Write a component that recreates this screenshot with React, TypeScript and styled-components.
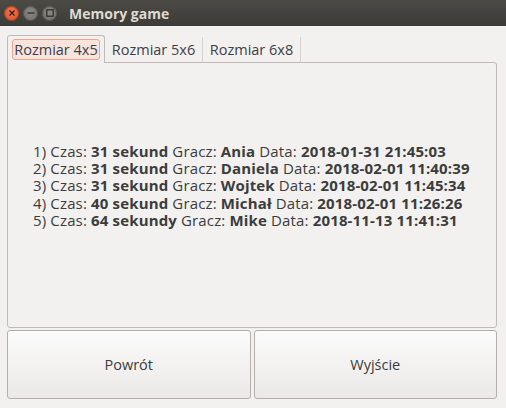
import React, { useState } from 'react';
import styled, { createGlobalStyle } from 'styled-components';

const GlobalStyle = createGlobalStyle`
  html, body {
    margin: 0;
    padding: 0;
    background: #f2f1f0;
  }
  body {
    font-family: 'Open Sans', 'DejaVu Sans', sans-serif;
  }
`;

const scores = [
  { czas: '31 sekund', gracz: 'Ania', data: '2018-01-31 21:45:03' },
  { czas: '31 sekund', gracz: 'Daniela', data: '2018-02-01 11:40:39' },
  { czas: '31 sekund', gracz: 'Wojtek', data: '2018-02-01 11:45:34' },
  { czas: '40 sekund', gracz: 'Michał', data: '2018-02-01 11:26:26' },
  { czas: '64 sekundy', gracz: 'Mike', data: '2018-11-13 11:41:31' },
];

const tabs = ['Rozmiar 4x5', 'Rozmiar 5x6', 'Rozmiar 6x8'];

const App = () => {
  const [active, setActive] = useState(0);

  return (
    <>
      <GlobalStyle />
      <Window>
        <TitleBar>
          <WinButtons>
            <WinButton $close>
              <svg width="8" height="8" viewBox="0 0 8 8">
                <path d="M1.5 1.5 L6.5 6.5 M6.5 1.5 L1.5 6.5" stroke="#3a1a10" strokeWidth="1.3" />
              </svg>
            </WinButton>
            <WinButton>
              <svg width="8" height="8" viewBox="0 0 8 8">
                <path d="M0.5 4 H7.5" stroke="#2e2d29" strokeWidth="1.3" />
              </svg>
            </WinButton>
            <WinButton>
              <svg width="8" height="8" viewBox="0 0 8 8">
                <rect x="0.8" y="0.8" width="6.4" height="6.4" fill="none" stroke="#2e2d29" strokeWidth="1.2" />
              </svg>
            </WinButton>
          </WinButtons>
          <Title>Memory game</Title>
        </TitleBar>

        <Content>
          <TabBar>
            {tabs.map((t, i) => (
              <Tab key={t} $active={i === active} onClick={() => setActive(i)}>
                <TabLabel $focused={i === active}>{t}</TabLabel>
              </Tab>
            ))}
          </TabBar>
          <Panel>
            <ScoreList>
              {scores.map((s, i) => (
                <ScoreRow key={i}>
                  {i + 1}) Czas: <b>{s.czas}</b> Gracz: <b>{s.gracz}</b> Data: <b>{s.data}</b>
                </ScoreRow>
              ))}
            </ScoreList>
          </Panel>
          <ButtonRow>
            <Button>Powrót</Button>
            <Button>Wyjście</Button>
          </ButtonRow>
        </Content>
      </Window>
    </>
  );
};

const Window = styled.div`
  width: 506px;
  height: 408px;
  display: flex;
  flex-direction: column;
  background: #f2f1f0;
  overflow: hidden;
`;

const TitleBar = styled.div`
  height: 26px;
  flex-shrink: 0;
  display: flex;
  align-items: center;
  padding-left: 4px;
  background: linear-gradient(#4b4a45, #3c3b37);
`;

const WinButtons = styled.div`
  display: flex;
  gap: 4px;
`;

const WinButton = styled.div<{ $close?: boolean }>`
  width: 15px;
  height: 15px;
  border-radius: 50%;
  display: flex;
  align-items: center;
  justify-content: center;
  background: ${(p) =>
    p.$close
      ? 'radial-gradient(circle at 50% 40%, #f0774f, #d84a1f)'
      : 'radial-gradient(circle at 50% 40%, #8a8984, #6b6a65)'};
  box-shadow: inset 0 0 0 1px rgba(0, 0, 0, 0.25);
`;

const Title = styled.div`
  margin-left: 12px;
  color: #dfdbd2;
  font-family: 'Open Sans', 'DejaVu Sans', sans-serif;
  font-weight: bold;
  font-size: 14px;
`;

const Content = styled.div`
  flex: 1;
  display: flex;
  flex-direction: column;
  padding: 9px 9px 10px 7px;
`;

const TabBar = styled.div`
  display: flex;
  height: 28px;
  align-items: flex-end;
  margin-bottom: -1px;
  position: relative;
  z-index: 1;
`;

const Tab = styled.div<{ $active: boolean }>`
  width: 98px;
  box-sizing: border-box;
  display: flex;
  align-items: center;
  justify-content: center;
  font-size: 14.5px;
  color: #3c4048;
  cursor: pointer;
  border-right: 1px solid #d6d3cf;
  ${(p) =>
    p.$active
      ? `
    background: #f2f1f0;
    border: 1px solid #bfbcb7;
    border-bottom: none;
    border-radius: 3px 3px 0 0;
    height: 28px;
  `
      : `
    border-bottom: 1px solid #bfbcb7;
    height: 26px;
  `}
`;

const TabLabel = styled.span<{ $focused: boolean }>`
  padding: 0 1px;
  border-radius: 3px;
  ${(p) =>
    p.$focused
      ? `
    background: #f7e4dc;
    border: 1px solid #f0a488;
  `
      : `border: 1px solid transparent;`}
`;

const Panel = styled.div`
  height: 266px;
  box-sizing: border-box;
  border: 1px solid #bfbcb7;
  border-radius: 0 3px 3px 3px;
  display: flex;
  align-items: center;
  padding-left: 25px;
  padding-bottom: 18px;
`;

const ScoreList = styled.div`
  display: flex;
  flex-direction: column;
`;

const ScoreRow = styled.div`
  font-size: 15px;
  line-height: 17.3px;
  letter-spacing: 0.15px;
  color: #3c3c3c;
  white-space: nowrap;
  b {
    font-weight: bold;
  }
`;

const ButtonRow = styled.div`
  display: flex;
  gap: 3px;
  margin-top: 2px;
`;

const Button = styled.button`
  flex: 1;
  height: 69px;
  font-family: 'Open Sans', 'DejaVu Sans', sans-serif;
  font-size: 14.5px;
  color: #3c3c3c;
  border: 1px solid #b3b0ab;
  border-radius: 3px;
  background: linear-gradient(#fbfbfb, #ebe9e7);
  cursor: pointer;
`;

export default App;
